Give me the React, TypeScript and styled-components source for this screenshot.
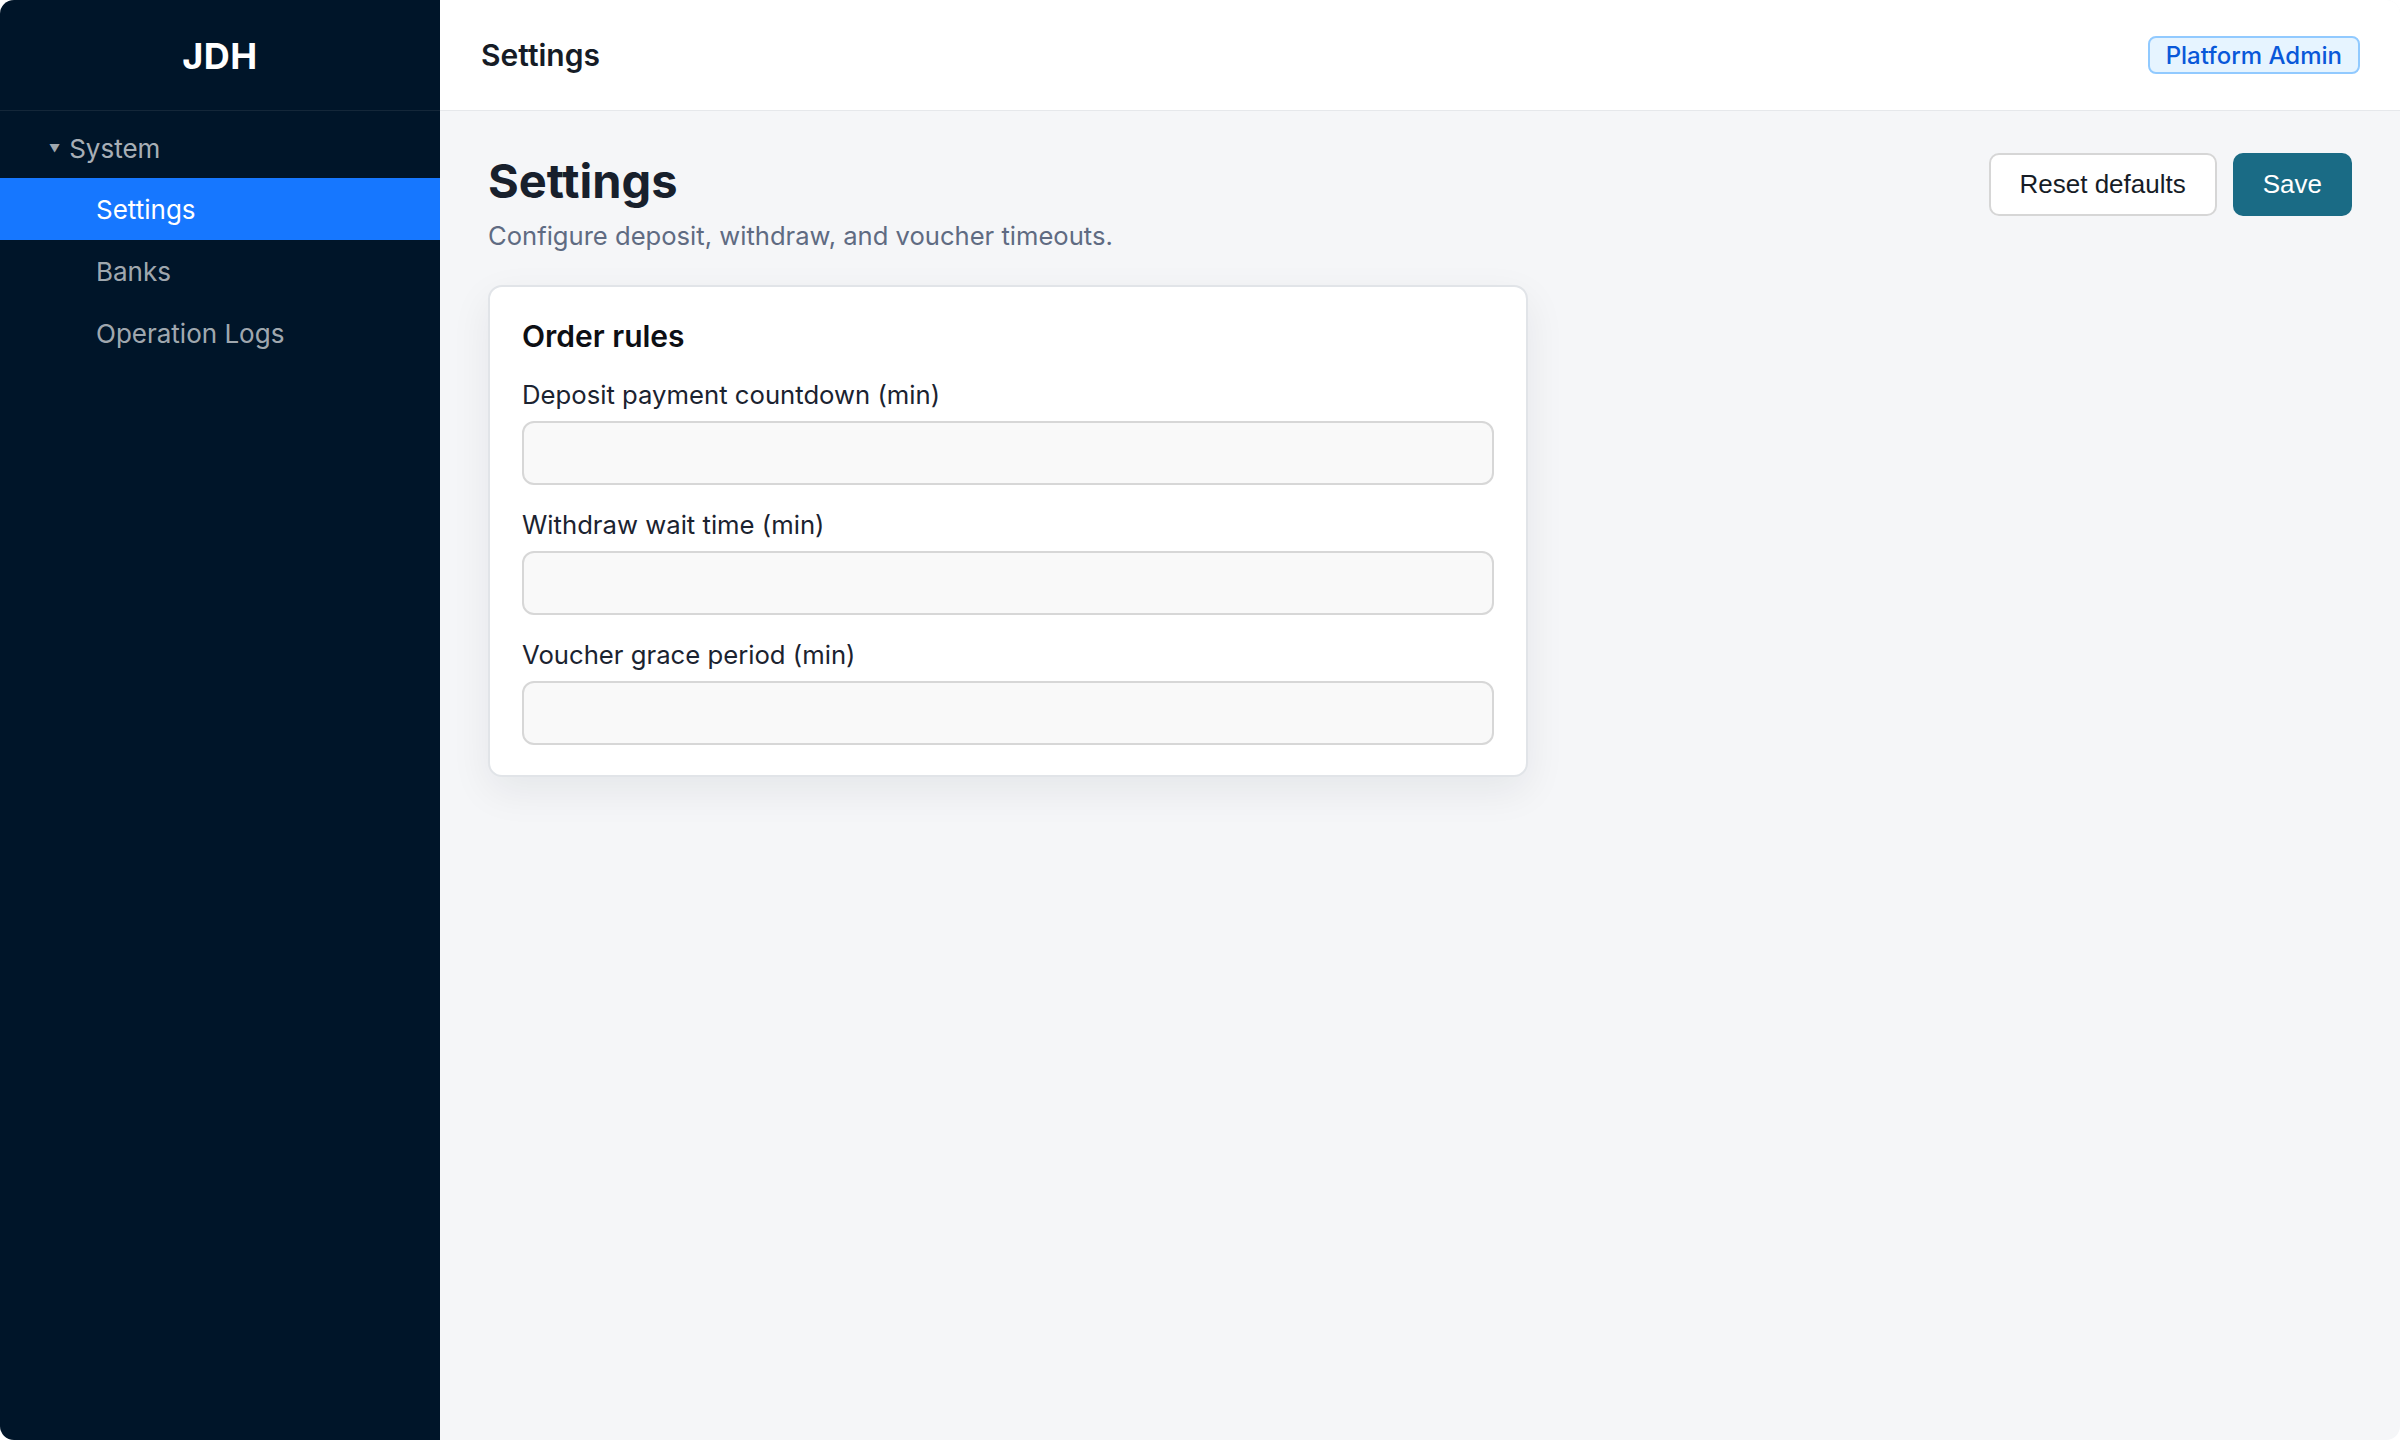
import styled, { createGlobalStyle } from "styled-components";

const GlobalStyle = createGlobalStyle`
  html, body {
    margin: 0;
    padding: 0;
    background: #ffffff;
  }
  body {
    font-family: Inter, "Noto Sans", "Liberation Sans", sans-serif;
    -webkit-font-smoothing: antialiased;
  }
  * {
    box-sizing: border-box;
  }
`;

type MenuItemProps = {
  $active?: boolean;
};

const fields = [
  "Deposit payment countdown (min)",
  "Withdraw wait time (min)",
  "Voucher grace period (min)",
];

export default function App() {
  return (
    <>
      <GlobalStyle />
      <Frame>
        <Sidebar>
          <Logo>JDH</Logo>
          <Menu>
            <GroupTitle>
              <Caret>▼</Caret>
              System
            </GroupTitle>
            <MenuItem $active>Settings</MenuItem>
            <MenuItem>Banks</MenuItem>
            <MenuItem>Operation Logs</MenuItem>
          </Menu>
        </Sidebar>
        <Main>
          <TopBar>
            <TopTitle>Settings</TopTitle>
            <RoleBadge>Platform Admin</RoleBadge>
          </TopBar>
          <Content>
            <PageHead>
              <div>
                <PageTitle>Settings</PageTitle>
                <PageSubtitle>
                  Configure deposit, withdraw, and voucher timeouts.
                </PageSubtitle>
              </div>
              <Actions>
                <GhostButton>Reset defaults</GhostButton>
                <PrimaryButton>Save</PrimaryButton>
              </Actions>
            </PageHead>
            <Card>
              <CardTitle>Order rules</CardTitle>
              {fields.map((label) => (
                <Field key={label}>
                  <Label>{label}</Label>
                  <Input type="text" />
                </Field>
              ))}
            </Card>
          </Content>
        </Main>
      </Frame>
    </>
  );
}

const Frame = styled.div`
  display: grid;
  grid-template-columns: 440px 1fr;
  height: 100vh;
  border-radius: 14px;
  overflow: hidden;
`;

const Sidebar = styled.aside`
  background-color: #001529;
  display: flex;
  flex-direction: column;
`;

const Logo = styled.div`
  height: 111px;
  padding-top: 2px;
  display: flex;
  align-items: center;
  justify-content: center;
  color: #ffffff;
  font-size: 36px;
  font-weight: 700;
  letter-spacing: 0.5px;
  border-bottom: 1px solid rgba(255, 255, 255, 0.08);
`;

const Menu = styled.nav`
  padding-top: 7px;
  display: flex;
  flex-direction: column;
`;

const GroupTitle = styled.div`
  height: 60px;
  display: flex;
  align-items: center;
  padding-left: 49px;
  color: rgba(255, 255, 255, 0.68);
  font-size: 26px;
`;

const Caret = styled.span`
  font-size: 11px;
  margin-right: 9px;
  color: rgba(255, 255, 255, 0.65);
`;

const MenuItem = styled.div<MenuItemProps>`
  height: 62px;
  display: flex;
  align-items: center;
  padding-left: 96px;
  font-size: 26px;
  color: ${(p) => (p.$active ? "#ffffff" : "rgba(255, 255, 255, 0.65)")};
  background-color: ${(p) => (p.$active ? "#1677ff" : "transparent")};
`;

const Main = styled.main`
  background-color: #f5f6f8;
  display: flex;
  flex-direction: column;
  min-width: 0;
`;

const TopBar = styled.header`
  height: 111px;
  background-color: #ffffff;
  border-bottom: 1px solid #e6e8eb;
  display: flex;
  align-items: center;
  justify-content: space-between;
  padding: 0 40px 0 41px;
`;

const TopTitle = styled.h1`
  margin: 0;
  font-size: 30px;
  font-weight: 600;
  color: #161c26;
`;

const RoleBadge = styled.span`
  height: 38px;
  display: inline-flex;
  align-items: center;
  padding: 0 16px;
  border: 2px solid #91caff;
  border-radius: 8px;
  background-color: #e6f4ff;
  color: #0958d9;
  font-size: 24px;
  font-weight: 500;
`;

const Content = styled.section`
  padding: 42px 48px;
  display: flex;
  flex-direction: column;
`;

const PageHead = styled.div`
  display: flex;
  justify-content: space-between;
  align-items: flex-start;
`;

const PageTitle = styled.h2`
  margin: 0;
  font-size: 47px;
  line-height: 56px;
  font-weight: 700;
  color: #18202c;
`;

const PageSubtitle = styled.p`
  margin: 9px 0 0;
  font-size: 25.6px;
  line-height: 36px;
  color: #5f6b82;
`;

const Actions = styled.div`
  display: flex;
  gap: 16px;
`;

const GhostButton = styled.button`
  height: 63px;
  padding: 0 29px;
  border: 2px solid #d6d6d6;
  border-radius: 10px;
  background-color: #ffffff;
  color: #161c26;
  font-family: "Liberation Sans", Arial, sans-serif;
  font-size: 26px;
`;

const PrimaryButton = styled.button`
  height: 63px;
  padding: 0 30px;
  border: none;
  border-radius: 10px;
  background-color: #1a6b85;
  color: #ffffff;
  font-family: "Liberation Sans", Arial, sans-serif;
  font-size: 26px;
`;

const Card = styled.div`
  margin-top: 31px;
  width: 1040px;
  padding: 30px 32px 30px;
  background-color: #ffffff;
  border: 2px solid #e1e4e8;
  border-radius: 14px;
  box-shadow: 0 14px 40px rgba(15, 23, 42, 0.07);
  display: flex;
  flex-direction: column;
  gap: 22px;
`;

const CardTitle = styled.h3`
  margin: 0;
  font-size: 30px;
  line-height: 38px;
  font-weight: 600;
  color: #0d0f14;
`;

const Field = styled.div`
  display: flex;
  flex-direction: column;
  gap: 8px;
`;

const Label = styled.label`
  font-size: 25.7px;
  line-height: 36px;
  color: #1b2330;
`;

const Input = styled.input`
  height: 64px;
  width: 100%;
  border: 2px solid #d7d7d7;
  border-radius: 12px;
  background-color: #f9f9f9;
  padding: 0 16px;
  font-size: 24px;
  outline: none;
`;
